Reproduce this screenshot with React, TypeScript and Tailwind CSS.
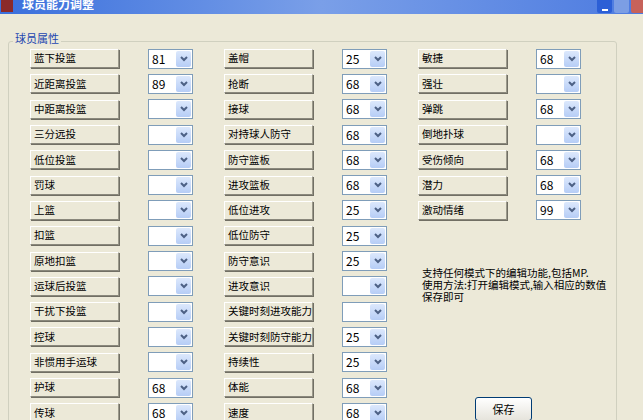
import React from "react";

const c1: [string, string][] = [["蓝下投篮","81"],["近距离投篮","89"],["中距离投篮",""],["三分远投",""],["低位投篮",""],["罚球",""],["上篮",""],["扣篮",""],["原地扣篮",""],["运球后投篮",""],["干扰下投篮",""],["控球",""],["非惯用手运球",""],["护球","68"],["传球","68"]];
const c2: [string, string][] = [["盖帽","25"],["抢断","68"],["接球","68"],["对持球人防守","68"],["防守篮板","68"],["进攻篮板","68"],["低位进攻","25"],["低位防守","25"],["防守意识","25"],["进攻意识",""],["关键时刻进攻能力",""],["关键时刻防守能力","25"],["持续性","25"],["体能","68"],["速度","68"]];
const c3: [string, string][] = [["敏捷","68"],["强壮",""],["弹跳","68"],["倒地扑球",""],["受伤倾向","68"],["潜力","68"],["激动情绪","99"]];

function Row({ l, v }: { l: string; v: string }) {
  return (
    <div className="flex items-center h-[25.3px]">
      <div className="w-[89px] h-[19px] border border-[#fff] border-r-[#9c9a8c] border-b-[#8a887c] bg-[#ece9d8] shadow-[1px_1px_0_#716f64] flex items-center pl-[3px] text-[10.5px] text-black leading-none whitespace-nowrap overflow-hidden">{l}</div>
      <div className="ml-[29px] w-[45px] h-[20px] border border-[#7f9db9] bg-white flex items-center">
        <span className="flex-1 pl-[3px] text-[12px] leading-none">{v}</span>
        <span className="w-[15px] h-[16px] mr-[1px] bg-gradient-to-b from-[#dce8fc] to-[#b6cdf6] rounded-[2px] flex items-center justify-center">
          <svg width="8" height="6" viewBox="0 0 8 6"><path d="M1 1 L4 4 L7 1" stroke="#4d6185" strokeWidth="2" fill="none" /></svg>
        </span>
      </div>
    </div>
  );
}

export default function App() {
  return (
    <div className="w-[643px] h-[420px] overflow-hidden bg-[#ece9d8] relative" style={{ fontFamily: '"Noto Sans CJK SC", sans-serif' }}>
      <div className="h-[14px] bg-gradient-to-r from-[#3a6fdc] via-[#7a9fe8] to-[#4d7be0] flex items-start overflow-hidden">
        <div className="w-[12px] h-[12px] bg-[#8b2a2a] ml-[1px]" />
        <span className="ml-[9px] text-white text-[12px] font-bold leading-[12px] -mt-[2px]">球员能力调整</span>
        <div className="ml-auto flex gap-[2px] shrink-0">
          <div className="w-[15px] h-[13px] bg-[#2c5fd6] rounded-b-[2px] flex items-end justify-center pb-[2px]"><div className="w-[6px] h-[2px] bg-white" /></div>
          <div className="w-[15px] h-[13px] bg-[#7c9ee4] rounded-b-[2px]" />
          <div className="w-[12px] h-[13px] bg-[#c7625a] rounded-bl-[2px]" />
        </div>
      </div>
      <div className="absolute left-[8px] top-[41px] w-[609px] h-[400px] border border-[#d0d0bf] rounded-[3px]" />
      <span className="absolute left-[13px] top-[33px] px-[2px] bg-[#ece9d8] text-[11px] text-[#1d46b0] leading-none">球员属性</span>
      <div className="absolute left-[30px] top-[46px] flex gap-[31px]">
        <div>{c1.map(([l, v]) => <Row key={l} l={l} v={v} />)}</div>
        <div>{c2.map(([l, v]) => <Row key={l} l={l} v={v} />)}</div>
        <div>{c3.map(([l, v]) => <Row key={l} l={l} v={v} />)}
          <div className="mt-[44px] ml-[4px] text-[10.5px] leading-[12px] w-[185px]">支持任何模式下的编辑功能,包括MP.<br />使用方法:打开编辑模式,输入相应的数值 保存即可</div>
        </div>
      </div>
      <div className="absolute left-[475px] top-[397px] w-[57px] h-[24px] border border-[#003c74] rounded-[3px] bg-gradient-to-b from-white to-[#e6e4dc] flex items-center justify-center text-[11px]">保存</div>
    </div>
  );
}
